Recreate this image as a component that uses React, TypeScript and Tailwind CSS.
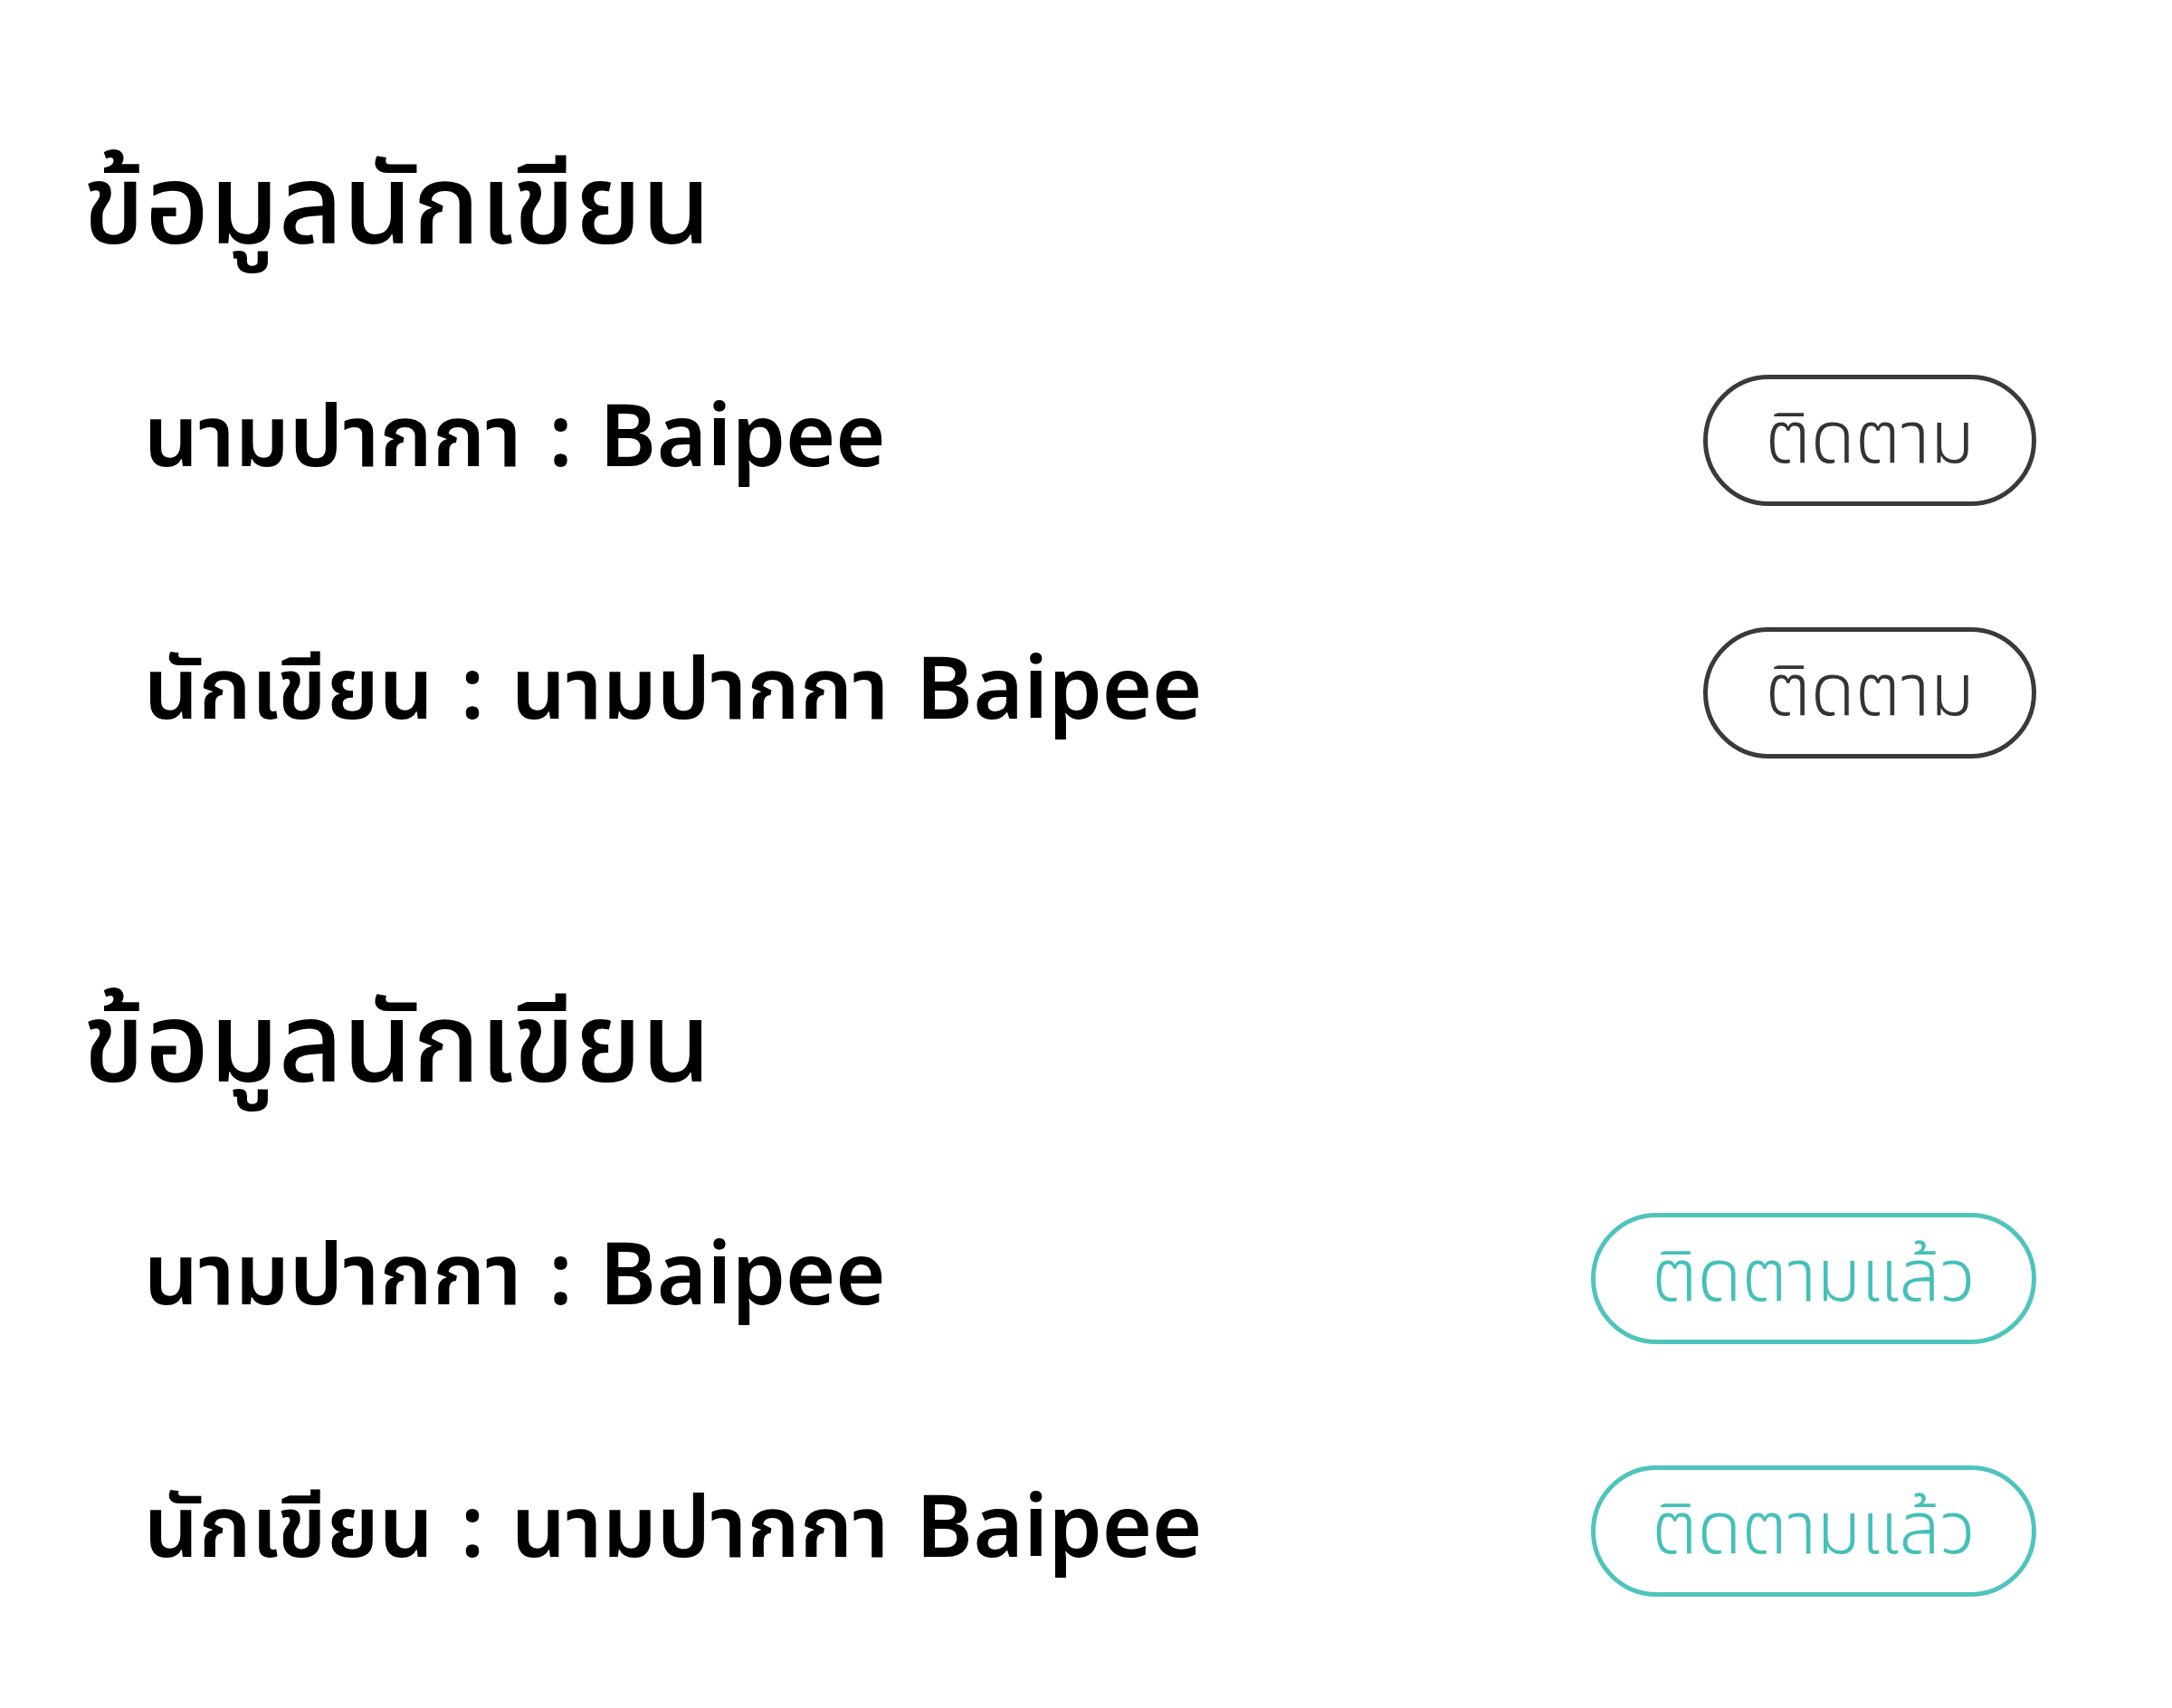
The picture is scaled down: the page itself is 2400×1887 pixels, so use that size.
import React from 'react'

const font = { fontFamily: '"Noto Sans Thai", "Noto Sans", "DejaVu Sans", sans-serif' }

type Row = { label: string }

const rows: Row[] = [{ label: 'นามปากกา : Baipee' }, { label: 'นักเขียน : นามปากกา Baipee' }]

function FollowButton({ followed }: { followed: boolean }) {
  if (followed) {
    return (
      <button className="h-[145px] w-[492px] rounded-full border-[5px] border-[#4fc4bd] text-[80px] font-light leading-none text-[#45c0b9]">
        ติดตามแล้ว
      </button>
    )
  }
  return (
    <button className="h-[145px] w-[368px] rounded-full border-[5px] border-[#3a3a3a] text-[80px] font-light leading-none text-[#333333]">
      ติดตาม
    </button>
  )
}

function WriterInfo({ followed }: { followed: boolean }) {
  return (
    <section className="flex flex-col">
      <h2 className="h-[150px] text-[123px] font-medium leading-[150px] text-black">ข้อมูลนักเขียน</h2>
      <div className="mt-[108px] flex flex-col gap-[134px] pl-[68px]">
        {rows.map((row) => (
          <div key={row.label} className="flex items-center justify-between">
            <span className="text-[95px] font-semibold leading-none text-black [word-spacing:5px]">
              {row.label}
            </span>
            <FollowButton followed={followed} />
          </div>
        ))}
      </div>
    </section>
  )
}

export default function App() {
  return (
    <div className="min-h-screen w-full bg-white pl-[91px] pr-[150px] pt-[156px]" style={font}>
      <div className="flex flex-col gap-[244px]">
        <WriterInfo followed={false} />
        <WriterInfo followed={true} />
      </div>
    </div>
  )
}
